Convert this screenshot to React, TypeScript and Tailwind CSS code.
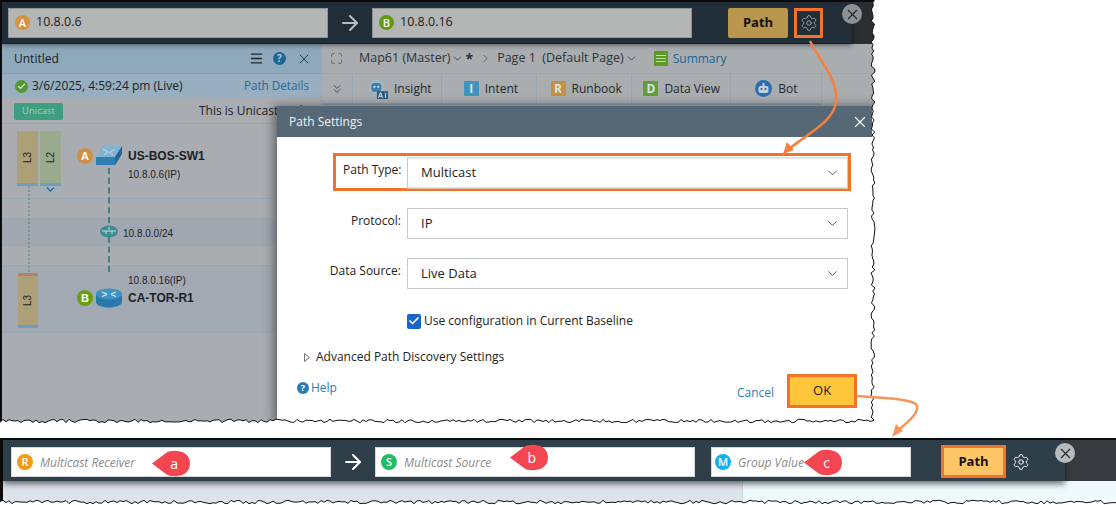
import React from "react";
import { ChevronDown, ChevronRight, ChevronsDown, Menu, X, Settings, Maximize, ArrowRight, Check } from "lucide-react";

const FONT = { fontFamily: '"Open Sans","Noto Sans",sans-serif' };

function jag(seed: number, from: number, to: number, base: number, amp: number, vertical: boolean) {
  const pts: string[] = [];
  let s = seed;
  const dir = to > from ? 1 : -1;
  for (let p = from; dir > 0 ? p <= to : p >= to; p += dir * 3) {
    s = (s * 9301 + 49297) % 233280;
    const o = base + (s / 233280 - 0.5) * amp;
    pts.push(vertical ? `${o.toFixed(1)},${p}` : `${p},${o.toFixed(1)}`);
  }
  return pts;
}

function Torn() {
  const right = jag(7, 3, 420, 873, 4, true);
  const bottom = jag(31, 873, 0, 421, 3.5, false);
  const line = [...right, ...bottom].join(" ");
  const fillPts = `875,0 ${line} 0,432 1116,432 1116,0`;
  const low = jag(53, 0, 1116, 502, 3.5, false).join(" ");
  return (
    <svg className="absolute left-0 top-0 z-[25] pointer-events-none" width="1116" height="505">
      <polygon points={fillPts} fill="#fff" />
      <polyline points={line} fill="none" stroke="#111" strokeWidth="1" />
      <polygon points={`${low} 1116,505 0,505`} fill="#fff" />
      <polyline points={low} fill="none" stroke="#111" strokeWidth="1" />
    </svg>
  );
}

function Badge({ c, l, size = 15 }: { c: string; l: string; size?: number }) {
  return (
    <span
      className="flex shrink-0 items-center justify-center rounded-full text-[11px] font-semibold leading-none text-white"
      style={{ background: c, width: size, height: size }}
    >
      {l}
    </span>
  );
}

function TopInput({ c, l, v }: { c: string; l: string; v: string }) {
  return (
    <div className="flex h-[30px] w-[320px] items-center gap-[6px] border border-[#8f9496] bg-[#b4b5b5] pl-[6px] text-[12.500px] text-[#1c1c1c]">
      <Badge c={c} l={l} />
      <span>{v}</span>
    </div>
  );
}

function LowInput({ c, l, v, w, pl = "pl-[5px]" }: { c: string; l: string; v: string; w: string; pl?: string }) {
  return (
    <div className={`flex h-[30px] ${w} ${pl} items-center gap-[7px] border border-[#d4d8da] bg-white text-[12px] italic text-[#8b8b8b]`}>
      <span className="not-italic"><Badge c={c} l={l} size={16} /></span>
      <span className="translate-y-[1px]">{v}</span>
    </div>
  );
}

function Sel({ v, h = "h-[31px]" }: { v: string; h?: string }) {
  return (
    <div className={`flex ${h} w-[441px] items-center justify-between border border-[#c9c9c9] bg-white pl-[13px] pr-[7px] text-[13px] text-[#222]`}>
      <span>{v}</span>
      <ChevronDown size={15} strokeWidth={1.4} className="text-[#444]" />
    </div>
  );
}

function Tab({ w, pl, icon, t }: { w: string; pl: string; icon: React.ReactNode; t: string }) {
  return (
    <div className={`flex h-full ${w} ${pl} items-center gap-[6px] border-r border-[#96a6b1] text-[12px] text-[#22282c]`}>
      {icon}
      <span>{t}</span>
    </div>
  );
}

function Square({ c, l }: { c: string; l: string }) {
  return (
    <span className="flex h-[15px] w-[15px] items-center justify-center rounded-[1px] text-[12px] font-bold leading-none text-[#d8e4e4]" style={{ background: c }}>
      {l}
    </span>
  );
}

function Switch() {
  return (
    <svg width="28" height="22" viewBox="0 0 28 22">
      <polygon points="8,1 27,1 20,12 1,12" fill="#7fb4d2" />
      <polygon points="1,12 20,12 20,20 1,20" fill="#2f7fb4" />
      <polygon points="20,12 27,1 27,9 20,20" fill="#1f6595" />
      <path d="M8 4l5 3M20 4l-5 3M9 10l4-3M18 10l-4-3" stroke="#c5dbe6" strokeWidth="1" fill="none" />
    </svg>
  );
}

function Router() {
  return (
    <svg width="26" height="20" viewBox="0 0 26 20">
      <path d="M0 6v8c0 3 6 5.500 13 5.500S26 17 26 14V6z" fill="#2878ab" />
      <ellipse cx="13" cy="6" rx="13" ry="5.500" fill="#3e93c6" />
      <path d="M6 4l5 2M20 4l-5 2M6 8.500l5-2M20 8.500l-5-2" stroke="#e5eef2" strokeWidth="1.100" fill="none" />
    </svg>
  );
}

function Hub() {
  return (
    <svg width="18" height="13" viewBox="0 0 18 13">
      <ellipse cx="9" cy="6.500" rx="9" ry="6" fill="#3f8a93" />
      <path d="M2 6h14M6 6v3M12 6v3M9 2v3" stroke="#c8dfe0" strokeWidth="1" fill="none" />
    </svg>
  );
}

function BotFace() {
  return (
    <svg width="17" height="17" viewBox="0 0 17 17">
      <circle cx="8.500" cy="8.500" r="8.500" fill="#2d6fae" />
      <rect x="3.500" y="6" width="10" height="7" rx="2" fill="#c2d2da" />
      <circle cx="6.500" cy="9" r="1.100" fill="#2d5f8e" />
      <circle cx="10.500" cy="9" r="1.100" fill="#2d5f8e" />
      <rect x="7.500" y="3" width="2" height="3" fill="#c2d2da" />
    </svg>
  );
}

function InsightIcon() {
  return (
    <svg width="20" height="20" viewBox="0 0 18 18">
      <circle cx="7.500" cy="7" r="6.500" fill="#9dbbce" />
      <rect x="3" y="3.500" width="9" height="8" rx="3" fill="#3f7ca6" />
      <circle cx="5.800" cy="7" r="1" fill="#dbe6ec" />
      <circle cx="9.200" cy="7" r="1" fill="#dbe6ec" />
      <rect x="8" y="11" width="10" height="7" fill="#2b587c" />
      <path d="M9.500 17l1.500-4.500h.6L13 17M10 15.500h2.500M15.800 12.500V17" stroke="#e3ecef" strokeWidth=".9" fill="none" />
    </svg>
  );
}

function Orange({ children, className }: { children: React.ReactNode; className: string }) {
  return <div className={`border-[3px] border-[#f4732a] ${className}`}>{children}</div>;
}

function Pin({ l, className }: { l: string; className: string }) {
  return (
    <div className={`absolute z-20 flex h-[27px] w-[38px] items-center justify-end ${className}`}>
      <svg className="absolute left-0 top-0" width="38" height="27" viewBox="0 0 38 27">
        <path d="M0 13.500L14 3C19-1 38-1 38 13.500S19 28 14 24z" fill="#f44650" />
      </svg>
      <span className="relative pr-[12px] text-[14px] leading-none text-white">{l}</span>
    </div>
  );
}

export default function App() {
  return (
    <div className="relative h-[505px] w-[1116px] overflow-hidden bg-white" style={FONT}>
      {/* upper capture */}
      <div className="relative flex h-[424px] w-[880px] flex-col border-l-2 border-t-2 border-[#0c0c0c] bg-[#a9adb0]">
        <div className="flex h-[42px] shrink-0 bg-[#2a2e31]">
          <div className="z-10 flex h-[41px] w-[850px] items-center bg-[#222e37] pl-[6px] shadow-[0_2px_5px_rgba(0,0,0,0.5)]">
            <TopInput c="#d6913c" l="A" v="10.8.0.6" />
            <ArrowRight size={24} strokeWidth={2} className="mx-[10px] text-[#b8bcbe]" />
            <TopInput c="#5f9a10" l="B" v="10.8.0.16" />
            <div className="ml-[36px] flex h-[30px] w-[60px] items-center justify-center rounded-[2px] bg-[#b8964e] text-[13px] font-bold text-[#111]">
              Path
            </div>
            <Orange className="ml-[6px] flex h-[30px] w-[29px] items-center justify-center">
              <Settings size={18} strokeWidth={1.2} className="text-[#a0a5a7]" />
            </Orange>
          </div>
        </div>
        <div className="flex min-h-0 flex-1">
          {/* left panel */}
          <div className="flex w-[320px] shrink-0 flex-col border-r border-[#98a9b5] bg-[#a9adb1] text-[#1c2125]">
            <div className="flex h-[30px] items-center justify-between border-b border-[#88a2b4] bg-[#8ea9bc] pl-[12px] pr-[9px] text-[12px]">
              <span>Untitled</span>
              <div className="flex items-center gap-[9px]">
                <Menu size={15} strokeWidth={2.2} className="text-[#22282c]" />
                <span className="flex h-[13px] w-[13px] items-center justify-center rounded-full bg-[#1d6595] text-[10px] font-bold text-[#b9cdd9]">?</span>
                <X size={16} strokeWidth={1.3} className="ml-[1px] text-[#22282c]" />
              </div>
            </div>
            <div className="flex h-[24px] items-center justify-between bg-[#97afc1] pl-[13px] pr-[12px] text-[12px]">
              <div className="flex items-center gap-[4px]">
                <span className="flex h-[13px] w-[13px] items-center justify-center rounded-full bg-[#4f9a2f]">
                  <Check size={9} strokeWidth={3.5} className="text-[#dce6d4]" />
                </span>
                <span>3/6/2025, 4:59:24 pm (Live)</span>
              </div>
              <span className="text-[11.700px] text-[#2a6a96]">Path Details</span>
            </div>
            <div className="flex h-[26px] items-center border-b border-[#97a8b4] pl-[12px] pt-[1px] text-[12px]">
              <span className="flex h-[17px] w-[49px] items-center justify-center rounded-[2px] bg-[#3f9e80] text-[9.500px] text-[#a5cdbd]">Unicast</span>
              <span className="ml-[136px] whitespace-nowrap">This is Unicast Path</span>
            </div>
            {/* diagram */}
            <div className="relative flex-1" style={{ fontFamily: '"Liberation Sans",sans-serif' }}>
              <div className="h-[75px] border-b border-[#97a8b4]" />
              <div className="flex h-[66px] flex-col justify-center">
                <div className="h-[28px] bg-[#a1a7b1]" />
              </div>
              <div className="h-[68px] border-y border-[#97a8b4] bg-[#a3a9b3]" />

              <div className="absolute left-[26px] top-[62px] h-[86px] border-l-2 border-dotted border-[#6f9a9a]" />
              <div className="absolute left-[106px] top-[44px] h-[104px] border-l-2 border-dashed border-[#3f7f7c]" />

              <div className="absolute left-[15px] top-[7px] flex h-[55px] w-[21px] items-center justify-center border-b-[3px] border-[#6f9fbc] bg-[#ad9f78] text-[10px]">
                <span className="-rotate-90">L3</span>
              </div>
              <div className="absolute left-[38px] top-[7px] flex h-[55px] w-[21px] items-center justify-center border-b-[3px] border-[#6f9fbc] bg-[#9aaa8c] text-[10px]">
                <span className="-rotate-90">L2</span>
              </div>
              <div className="absolute left-[37px] top-[62px] flex h-[7px] w-[22px] items-center justify-center bg-[#a1afbb]">
                <ChevronDown size={13} strokeWidth={2.5} className="text-[#1f6595]" />
              </div>

              <div className="absolute left-[75px] top-[21px] flex items-center">
                <Badge c="#cd9048" l="A" size={16} />
                <div className="ml-[2px]"><Switch /></div>
              </div>
              <span className="absolute left-[126px] top-[23px] text-[12px] font-bold">US-BOS-SW1</span>
              <span className="absolute left-[126px] top-[43px] text-[10px]">10.8.0.6(IP)</span>

              <div className="absolute left-[98px] top-[101px]"><Hub /></div>
              <span className="absolute left-[121px] top-[102px] text-[10px]">10.8.0.0/24</span>

              <div className="absolute left-[16px] top-[149px] flex h-[55px] w-[20px] items-center justify-center border-b-[3px] border-t-[3px] border-b-[#6f9fbc] border-t-[#b5805f] bg-[#ad9f78] text-[10px]">
                <span className="-rotate-90">L3</span>
              </div>
              <span className="absolute left-[126px] top-[149px] text-[10px]">10.8.0.16(IP)</span>
              <div className="absolute left-[75px] top-[164px] flex items-center">
                <Badge c="#679e14" l="B" size={16} />
                <div className="ml-[3px]"><Router /></div>
              </div>
              <span className="absolute left-[126px] top-[165px] text-[12px] font-bold">CA-TOR-R1</span>
            </div>
          </div>
          {/* right top */}
          <div className="flex flex-1 flex-col text-[#2c3236]">
            <div className="flex h-[30px] items-center border-b border-[#9aa8b1] pl-[8px] text-[12.500px]">
              <Maximize size={13} strokeWidth={1.2} className="text-[#3c454a]" />
              <span className="ml-[16px]">Map61 (Master)</span>
              <ChevronDown size={13} strokeWidth={1.4} className="ml-[1px]" />
              <span className="ml-[1px] text-[14px] font-bold">*</span>
              <ChevronRight size={13} strokeWidth={1} className="ml-[6px]" />
              <span className="ml-[5px] whitespace-pre">Page 1  (Default Page)</span>
              <ChevronDown size={13} strokeWidth={1.4} className="ml-[1px]" />
              <span className="ml-[16px] flex h-[15px] w-[14px] flex-col justify-center gap-[2px] rounded-[1px] bg-[#5c9a26] px-[2px]">
                <i className="block h-[1px] bg-[#c9dcb4]" />
                <i className="block h-[1px] bg-[#c9dcb4]" />
                <i className="block h-[1px] bg-[#c9dcb4]" />
              </span>
              <span className="ml-[5px] text-[12px] text-[#1d6590]">Summary</span>
            </div>
            <div className="flex h-[31px] w-[500px] items-center border-b-2 border-[#8aa0ae]">
              <div className="flex h-full w-[31px] items-center justify-center border-r border-[#96a6b1]">
                <ChevronsDown size={14} strokeWidth={1.3} />
              </div>
              <Tab w="w-[89px]" pl="pl-[15px]" icon={<InsightIcon />} t="Insight" />
              <Tab w="w-[95px]" pl="pl-[22px]" icon={<Square c="#3f94bd" l="I" />} t="Intent" />
              <Tab w="w-[96px]" pl="pl-[14px]" icon={<Square c="#c58f45" l="R" />} t="Runbook" />
              <Tab w="w-[99px]" pl="pl-[11px]" icon={<Square c="#5f9f3a" l="D" />} t="Data View" />
              <Tab w="w-[91px]" pl="pl-[24px]" icon={<BotFace />} t="Bot" />
            </div>
          </div>
        </div>

        {/* dialog */}
        <div className="absolute left-[275px] top-[104px] flex h-[318px] w-[605px] flex-col bg-white text-[#222] shadow-[-3px_0_10px_rgba(0,0,0,0.45)]">
          <div className="flex h-[31px] shrink-0 items-center bg-[#566876] pl-[12px] pr-[3px] text-[12px] text-[#eef1f3]" style={{ width: 595 }}>
            <span>Path Settings</span>
            <X size={18} strokeWidth={1.5} className="ml-auto text-white" />
          </div>
          <div className="flex flex-col pt-[16px]">
            <Orange className="ml-[56px] flex h-[38px] w-[518px] items-center bg-white pl-[7px]">
              <span className="w-[61px] -translate-y-[2px] whitespace-nowrap text-[12px]">Path Type:</span>
              <div className="ml-[5px] translate-y-[0.5px]"><Sel v="Multicast" h="h-[31px]" /></div>
            </Orange>
            <div className="mt-[17px] flex items-center">
              <span className="w-[124px] -translate-y-[3px] text-right text-[12px]">Protocol:</span>
              <div className="ml-[6px]"><Sel v="IP" /></div>
            </div>
            <div className="mt-[19px] flex items-center">
              <span className="w-[124px] -translate-y-[3px] text-right text-[12px]">Data Source:</span>
              <div className="ml-[6px]"><Sel v="Live Data" /></div>
            </div>
            <div className="ml-[130px] mt-[23px] flex items-center gap-[3px] text-[12px]">
              <span className="flex h-[15px] w-[14px] items-center justify-center rounded-[2px] bg-[#1667c9]">
                <Check size={12} strokeWidth={3.5} className="text-white" />
              </span>
              <span>Use configuration in Current Baseline</span>
            </div>
            <div className="ml-[27px] mt-[18px] flex items-center gap-[6px] text-[12px]">
              <svg width="6" height="9" viewBox="0 0 6 9"><path d="M.5.5L5.500 4.500L.5 8.500z" fill="none" stroke="#777" /></svg>
              <span>Advanced Path Discovery Settings</span>
            </div>
            <div className="ml-[20px] mt-[8px] flex items-start text-[12px] text-[#2a7cb6]">
              <div className="mt-[5px] flex items-center gap-[2px]">
                <span className="flex h-[12px] w-[12px] items-center justify-center rounded-full bg-[#2a7cb6] text-[9px] font-bold text-white">?</span>
                <span>Help</span>
              </div>
              <span className="ml-[400px] mt-[10px]">Cancel</span>
              <Orange className="ml-[13px] flex h-[34px] w-[70px] items-center justify-center bg-[#fec63b] text-[13px] text-[#1a1a1a]">OK</Orange>
            </div>
          </div>
        </div>

        <div className="absolute left-[840px] top-[2px] z-20 flex h-[20px] w-[20px] items-center justify-center rounded-full bg-[#8d9294]">
          <X size={17} strokeWidth={1.6} className="text-[#22282c]" />
        </div>
      </div>

      {/* lower capture */}
      <div className="mt-[14px] flex h-[67px] w-[1116px] flex-col border-l-[3px] border-t-2 border-[#0c0c0c] bg-[#dde3ea]">
        <div className="flex h-[41px] shrink-0 bg-[#383c3f]">
          <div className="z-10 flex h-[41px] w-[1062px] items-center bg-[#2f3f4a] pl-[8px] pt-[2px] shadow-[0_3px_6px_rgba(0,0,0,0.55)]">
            <LowInput c="#f39a12" l="R" v="Multicast Receiver" w="w-[320px]" />
            <ArrowRight size={24} strokeWidth={2} className="mx-[10px] text-white" />
            <LowInput c="#25bb62" l="S" v="Multicast Source" w="w-[320px]" />
            <div className="ml-[16px]"><LowInput c="#11b0ea" l="M" v="Group Value" w="w-[200px]" pl="pl-[3px]" /></div>
            <Orange className="ml-[30px] flex h-[33px] w-[65px] items-center justify-center bg-[#fdc566] text-[13px] font-bold text-[#111]">Path</Orange>
            <Settings size={18} strokeWidth={1.3} className="ml-[6px] text-white" />
          </div>
        </div>
        <div className="flex flex-1">
          <div className="w-[739px]" />
          <div className="flex-1 border-l border-[#cfd5da] bg-[#effafc]" />
        </div>
      </div>

      <Pin l="a" className="left-[152px] top-[450px]" />
      <Pin l="b" className="left-[510px] top-[444px]" />
      <Pin l="c" className="left-[804px] top-[449px]" />

      <div className="absolute left-[1055px] top-[443px] z-20 flex h-[20px] w-[20px] items-center justify-center rounded-full bg-[#b7bbbd]">
        <X size={17} strokeWidth={1.6} className="text-[#22282c]" />
      </div>

      <Torn />

      <svg className="absolute left-0 top-0 z-30 pointer-events-none" width="1116" height="505">
        <path d="M810 41C820 62 838 78 836 102C834 122 805 135 788 150" fill="none" stroke="#f4823e" strokeWidth="2.500" />
        <path d="M783 154L794 150L787 142z" fill="#f4823e" />
        <path d="M857 396C880 398 905 398 916 404C922 412 905 424 895 433" fill="none" stroke="#f4955a" strokeWidth="2.500" />
        <path d="M892 437L903 431L896 424z" fill="#f4955a" />
      </svg>
    </div>
  );
}
